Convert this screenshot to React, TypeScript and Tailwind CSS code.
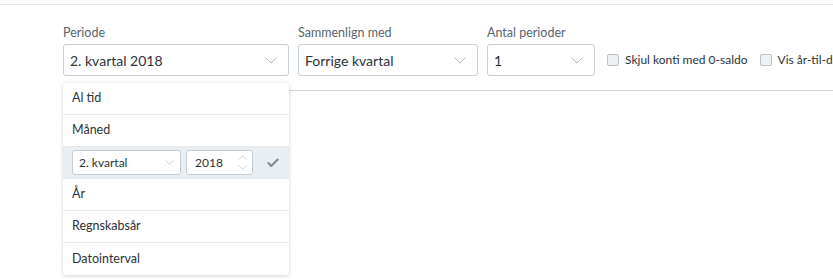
import { Check } from "lucide-react";

function Chevron({ className }: { className?: string }) {
  return (
    <svg viewBox="0 0 14 8" className={className} fill="none" stroke="currentColor" strokeWidth="1">
      <polyline points="0.5,0.5 7,7 13.5,0.5" />
    </svg>
  );
}

function Select({ label, value, width }: { label: string; value: string; width: string }) {
  return (
    <div className={`flex shrink-0 flex-col ${width}`}>
      <span className="h-[18px] text-[12.5px] leading-[18px] text-[#59656f]">{label}</span>
      <div className="mt-[2px] flex h-[32px] items-center justify-between rounded-[3px] border border-[#c5cdd4] bg-white pl-[6px] pr-[10px]">
        <span className="text-[14px] text-[#2d3338]">{value}</span>
        <Chevron className="h-[7px] w-[14px] text-[#a2abb3]" />
      </div>
    </div>
  );
}

function Checkbox({ label }: { label: string }) {
  return (
    <label className="flex shrink-0 items-center gap-[6px] whitespace-nowrap text-[12px] text-[#2d3338]">
      <span className="h-[12px] w-[12px] rounded-[2px] border border-[#b8c0c7] bg-[#eef1f3]" />
      {label}
    </label>
  );
}

const items = ["Al tid", "Måned", "__custom", "År", "Regnskabsår", "Datointerval"];

export default function App() {
  return (
    <div className="relative h-[279px] w-[833px] overflow-hidden bg-white font-['Lato',sans-serif]">
      <div className="h-[5px] border-b border-[#e3e6e9]" />
      <div className="ml-[63px] mt-[19px] border-b border-[#cfd6dc] pb-[14px]">
        <div className="flex items-end gap-[9px]">
          <div className="relative shrink-0">
            <Select label="Periode" value="2. kvartal 2018" width="w-[226px]" />
            <div className="absolute left-0 top-[59px] z-10 w-[226px] rounded-[3px] bg-white shadow-[0_1px_4px_rgba(0,0,0,0.18)]">
              {items.map((item, i) =>
                item === "__custom" ? (
                  <div key={i} className="flex h-[32px] items-center gap-[5px] border-b border-[#e6e9ec] bg-[#e9eef3] pl-[9px]">
                    <div className="flex h-[25px] w-[109px] items-center justify-between rounded-[3px] border border-[#c5cdd4] bg-white pl-[6px] pr-[6px]">
                      <span className="text-[12px] text-[#2d3338]">2. kvartal</span>
                      <Chevron className="h-[5px] w-[9px] text-[#b2bac1]" />
                    </div>
                    <div className="flex h-[25px] w-[67px] items-center justify-between rounded-[3px] border border-[#c5cdd4] bg-white pl-[8px] pr-[5px]">
                      <span className="text-[12px] text-[#2d3338]">2018</span>
                      <div className="flex flex-col gap-[5px]">
                        <Chevron className="h-[5px] w-[9px] rotate-180 text-[#b2bac1]" />
                        <Chevron className="h-[5px] w-[9px] text-[#b2bac1]" />
                      </div>
                    </div>
                    <Check className="ml-[8px] h-[14px] w-[14px] text-[#7f8b95]" strokeWidth={3.5} />
                  </div>
                ) : (
                  <div
                    key={i}
                    className={`flex h-[32px] items-center pl-[9px] text-[12.5px] text-[#2d3338] ${i < items.length - 1 ? "border-b border-[#e6e9ec]" : ""}`}
                  >
                    {item}
                  </div>
                ),
              )}
            </div>
          </div>
          <Select label="Sammenlign med" value="Forrige kvartal" width="w-[180px]" />
          <Select label="Antal perioder" value="1" width="w-[108px]" />
          <div className="flex h-[32px] shrink-0 items-center gap-[12px] pl-[3px]">
            <Checkbox label="Skjul konti med 0-saldo" />
            <Checkbox label="Vis år-til-dato" />
          </div>
        </div>
      </div>
    </div>
  );
}
